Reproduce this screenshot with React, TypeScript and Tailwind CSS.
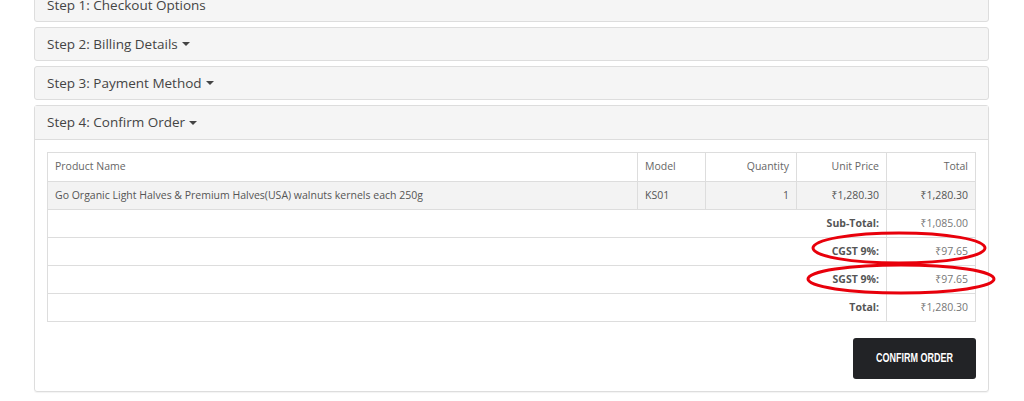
import React from 'react';

const font = { fontFamily: '"Open Sans", "Noto Sans", sans-serif' };

const Caret = () => (
  <span className="inline-block ml-1 align-middle border-x-[4px] border-x-transparent border-t-[4px] border-t-[#444]" />
);

const StepHeader: React.FC<{ title: string; caret?: boolean }> = ({ title, caret }) => (
  <div className="h-[34px] border border-[#ddd] rounded-[3px] bg-[#f5f5f5] flex items-center px-3 text-[13.5px] text-[#444]">
    {title}
    {caret && <Caret />}
  </div>
);

const totals = [
  { label: 'Sub-Total:', value: '₹1,085.00' },
  { label: 'CGST 9%:', value: '₹97.65' },
  { label: 'SGST 9%:', value: '₹97.65' },
  { label: 'Total:', value: '₹1,280.30' },
];

export default function App() {
  return (
    <div className="w-[1024px] h-[401px] bg-white overflow-hidden relative" style={font}>
      <div className="ml-[34px] w-[955px] flex flex-col gap-[5px] -mt-[12px]">
        <StepHeader title="Step 1: Checkout Options" />
        <StepHeader title="Step 2: Billing Details" caret />
        <StepHeader title="Step 3: Payment Method" caret />

        <div className="border border-[#ddd] rounded-[3px] shadow-[0_1px_1px_rgba(0,0,0,0.05)]">
          <div className="h-[34px] flex items-center px-3 text-[13.5px] text-[#444] bg-[#f5f5f5] border-b border-[#ddd]">
            Step 4: Confirm Order
            <Caret />
          </div>
          <div className="p-3">
            <table className="w-full border-collapse text-[10.5px] text-[#666]">
              <thead>
                <tr className="h-[29px]">
                  <td className="border border-[#ddd] px-[7px] text-left">Product Name</td>
                  <td className="border border-[#ddd] px-[7px] text-left w-[68px]">Model</td>
                  <td className="border border-[#ddd] px-[7px] text-right w-[91px]">Quantity</td>
                  <td className="border border-[#ddd] px-[7px] text-right w-[90px]">Unit Price</td>
                  <td className="border border-[#ddd] px-[7px] text-right w-[89px]">Total</td>
                </tr>
              </thead>
              <tbody>
                <tr className="h-[28px] bg-[#f3f3f3] text-[#555]">
                  <td className="border border-[#ddd] px-[7px]">Go Organic Light Halves &amp; Premium Halves(USA) walnuts kernels each 250g</td>
                  <td className="border border-[#ddd] px-[7px]">KS01</td>
                  <td className="border border-[#ddd] px-[7px] text-right">1</td>
                  <td className="border border-[#ddd] px-[7px] text-right">₹1,280.30</td>
                  <td className="border border-[#ddd] px-[7px] text-right">₹1,280.30</td>
                </tr>
                {totals.map((t) => (
                  <tr key={t.label} className="h-[28px]">
                    <td colSpan={4} className="border border-[#ddd] px-[7px] text-right font-bold text-[#555]">
                      {t.label}
                    </td>
                    <td className="border border-[#ddd] px-[7px] text-right text-[#777]">{t.value}</td>
                  </tr>
                ))}
              </tbody>
            </table>
            <div className="flex justify-end mt-[16px]">
              <button className="w-[123px] h-[41px] rounded-[3px] bg-[#222326] text-white flex items-center justify-center">
                <span
                  className="inline-block scale-x-[0.72] text-[12.5px] font-bold whitespace-nowrap"
                  style={{ fontFamily: '"Liberation Sans", Arial, sans-serif' }}
                >
                  CONFIRM ORDER
                </span>
              </button>
            </div>
          </div>
        </div>
      </div>

      {/* red annotation ellipses */}
      <svg className="absolute left-0 top-0 pointer-events-none" width="1024" height="401">
        <ellipse cx="899" cy="248" rx="86" ry="15" fill="none" stroke="#e8000b" strokeWidth="3" />
        <ellipse cx="901" cy="279" rx="93" ry="14" fill="none" stroke="#e8000b" strokeWidth="3" />
      </svg>
    </div>
  );
}
